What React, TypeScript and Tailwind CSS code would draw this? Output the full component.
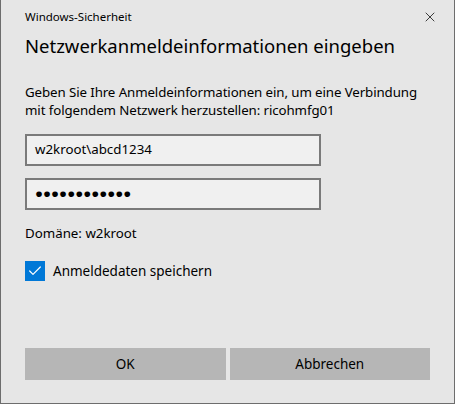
import { Check, X } from 'lucide-react';

const font = { fontFamily: '"Segoe UI", "Noto Sans", sans-serif' };

function Field({ value }: { value: string }) {
  return (
    <div className="flex h-8 w-[296px] items-center border-2 border-[#7a7a7a] bg-[#f0f0f0] px-2 text-[13.3px] text-black">
      {value}
    </div>
  );
}

export default function App() {
  return (
    <div
      className="flex h-[404px] w-[455px] flex-col border border-t-0 border-[#6d6d6d] bg-[#e6e6e6] text-black"
      style={font}
    >
      <div className="flex h-[33px] items-center justify-between pl-6 pr-4">
        <span className="text-[11.5px]">Windows-Sicherheit</span>
        <X className="h-4 w-4 text-[#222]" strokeWidth={1.3} />
      </div>
      <div className="flex flex-1 flex-col px-6">
        <h1 className="text-[18.5px] leading-[26px]">Netzwerkanmeldeinformationen eingeben</h1>
        <p className="mt-[24px] text-[13.3px] leading-[18px] tracking-[-0.1px]">
          Geben Sie Ihre Anmeldeinformationen ein, um eine Verbindung
          <br />
          mit folgendem Netzwerk herzustellen: ricohmfg01
        </p>
        <div className="mt-[15px] flex flex-col gap-3">
          <Field value="w2kroot\abcd1234" />
          <Field value="●●●●●●●●●●●●" />
        </div>
        <div className="mt-[14px] text-[13.3px]">Domäne: w2kroot</div>
        <label className="mt-[17px] flex items-center gap-2 text-[13.5px]">
          <span className="flex h-5 w-5 items-center justify-center bg-[#0078d7]">
            <Check className="h-4 w-4 text-white" strokeWidth={1.8} />
          </span>
          Anmeldedaten speichern
        </label>
        <div className="mt-auto mb-[23px] flex gap-1">
          <button className="h-8 flex-1 bg-[#b6b6b6] text-[13.5px]">OK</button>
          <button className="h-8 flex-1 bg-[#b6b6b6] text-[13.5px]">Abbrechen</button>
        </div>
      </div>
    </div>
  );
}
